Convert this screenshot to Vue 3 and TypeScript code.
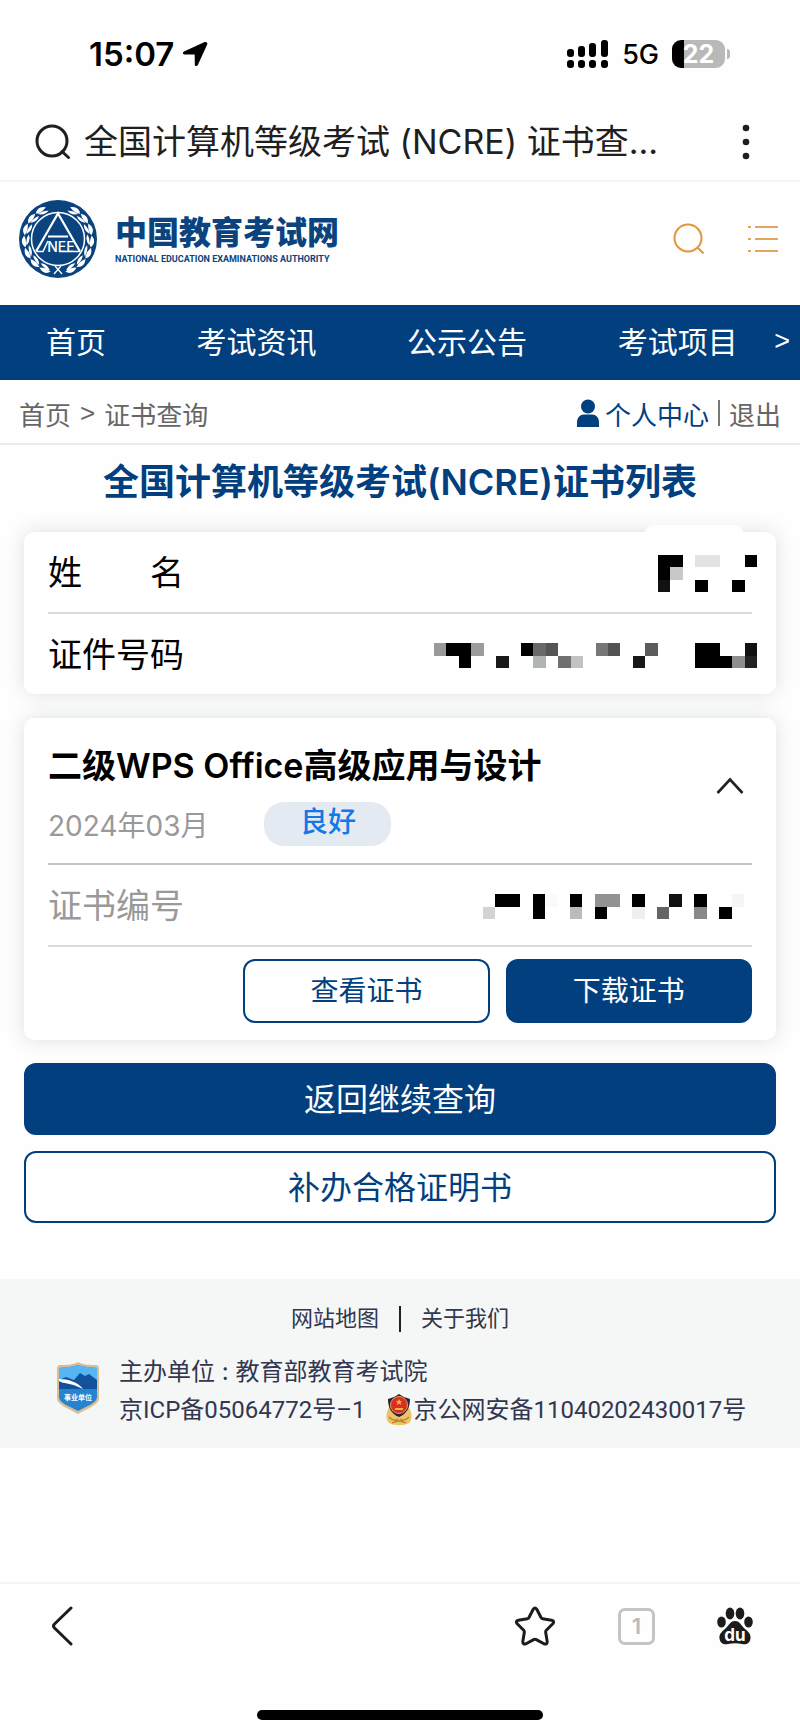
<script setup lang="ts">
import { ref } from 'vue'

type Cell = [col: number, row: number, fill: string]
interface Mask {
  cols: number
  rows: number
  cells: Cell[]
}

const navItems = ['首页', '考试资讯', '公示公告', '考试项目']
const expanded = ref(true)

const nameMask: Mask = {
  cols: 8,
  rows: 3,
  cells: [
    [0, 0, '#000'], [1, 0, '#000'], [0, 1, '#000'], [1, 1, '#c8c8c8'], [0, 2, '#111'],
    [3, 0, '#e2e4e4'], [4, 0, '#e2e4e4'], [7, 0, '#000'], [3, 2, '#000'], [6, 2, '#000'],
  ],
}
const idMask: Mask = {
  cols: 26,
  rows: 2,
  cells: [
    [0, 0, '#999'], [1, 0, '#000'], [2, 0, '#000'], [3, 0, '#9c9c9c'], [2, 1, '#000'], [5, 1, '#191919'],
    [7, 0, '#000'], [8, 0, '#696969'], [9, 0, '#555'], [8, 1, '#b0b4b2'], [10, 1, '#707070'], [11, 1, '#c2c2c2'],
    [13, 0, '#777'], [14, 0, '#535353'], [17, 0, '#5c5c5c'], [16, 1, '#181818'],
    [21, 0, '#000'], [22, 0, '#000'], [25, 0, '#111'], [21, 1, '#000'], [22, 1, '#000'], [23, 1, '#000'],
    [24, 1, '#8e8e8e'], [25, 1, '#222'],
  ],
}
const serialMask: Mask = {
  cols: 21,
  rows: 2,
  cells: [
    [0, 1, '#d3d3d3'], [1, 0, '#000'], [2, 0, '#000'], [4, 0, '#000'], [4, 1, '#000'], [5, 0, '#fafafa'],
    [7, 0, '#000'], [7, 1, '#bbb'], [9, 0, '#929292'], [10, 0, '#929292'], [9, 1, '#000'],
    [12, 0, '#000'], [12, 1, '#efefef'], [15, 0, '#111'], [14, 1, '#646464'], [17, 0, '#000'], [17, 1, '#888'],
    [19, 1, '#000'], [20, 0, '#f5f5f5'],
  ],
}

// Laurel leaves on both sides of the emblem, as angles from the bottom
const leaves = [16, 37, 58, 79, 100, 121, 142].flatMap((a) => [a, -a])
</script>

<template>
  <div class="page">
    <header class="status">
      <div class="clock">
        <span>15:07</span>
        <svg width="26" height="26" viewBox="0 0 26 26" aria-hidden="true">
          <path d="M24.600 1.400 C25.500 1.900 25.600 2.700 25.200 3.600 L15.800 24 C15 25.700 12.800 25.400 12.800 23.400 L12.700 13.600 L2.500 13.400 C.5 13.300 .3 11.200 2 10.400 L22.600 1.100 C23.400.8 24 .9 24.600 1.400Z" />
        </svg>
      </div>
      <div class="signals">
        <svg width="42" height="30" viewBox="0 0 42 30" aria-hidden="true">
          <rect x="0" y="10" width="7" height="8" rx="3" />
          <rect x="11" y="7" width="7" height="11" rx="3" />
          <rect x="22" y="4" width="7" height="14" rx="3" />
          <rect x="34" y="1" width="7" height="17" rx="3" />
          <rect x="0" y="21" width="7" height="8" rx="3" />
          <rect x="11" y="21" width="7" height="8" rx="3" />
          <rect x="22" y="21" width="7" height="8" rx="3" />
          <rect x="34" y="21" width="7" height="8" rx="3" />
        </svg>
        <span class="network">5G</span>
        <span class="battery"><span>22</span></span>
      </div>
    </header>

    <div class="address">
      <button class="query" type="button">
        <svg width="36" height="36" viewBox="0 0 36 36" fill="none" stroke="#1f1f1f" stroke-width="3" stroke-linecap="round" aria-hidden="true">
          <circle cx="17" cy="17" r="15" />
          <path d="M27 27.500 L33.500 33.500" />
        </svg>
        <span>全国计算机等级考试 (NCRE) 证书查...</span>
      </button>
      <button class="more" type="button" aria-label="更多">
        <svg width="8" height="36" viewBox="0 0 8 36" fill="#1f1f1f">
          <circle cx="4" cy="4" r="3.300" /><circle cx="4" cy="18" r="3.300" /><circle cx="4" cy="32" r="3.300" />
        </svg>
      </button>
    </div>

    <div class="brand">
      <a class="logo" href="#">
        <svg width="78" height="78" viewBox="0 0 78 78" aria-hidden="true">
          <circle cx="39" cy="39" r="39" fill="#0b437f" />
          <g fill="#fff">
            <g v-for="a in leaves" :key="a" :transform="`rotate(${a} 39 39)`">
              <path :transform="a > 0 ? '' : 'translate(78 0) scale(-1 1)'" d="M41 72.500 Q35 78 29 71.500 Q36 69.500 41 72.500Z M39.500 71 Q35 65.500 29 67 Q33 71 39.500 71Z" />
            </g>
          </g>
          <path d="M35 74 L42 66 M43 74 L36 66" stroke="#fff" stroke-width="1.300" />
          <circle cx="39" cy="39" r="26.500" fill="#0b437f" stroke="#fff" stroke-width="1.500" />
          <path d="M17 51.500 L39 13.500 L61 51.500 M29 36.500 H49" fill="none" stroke="#fff" stroke-width="2.200" />
          <path d="M18 51.500 H24 L29 41 M40 51.500 H61" fill="none" stroke="#fff" stroke-width="1.500" />
          <text x="42" y="52" text-anchor="middle" class="mono">NEE</text>
        </svg>
        <span class="wordmark">
          <strong>中国教育考试网</strong>
          <small>NATIONAL EDUCATION EXAMINATIONS AUTHORITY</small>
        </span>
      </a>
      <div class="tools">
        <button type="button" aria-label="搜索">
          <svg width="32" height="32" viewBox="0 0 32 32" fill="none" stroke="#e3943c" stroke-width="2">
            <circle cx="15" cy="15" r="13.500" /><path d="M24.500 24.500 L30.500 30.500" />
          </svg>
        </button>
        <button type="button" aria-label="菜单">
          <svg width="32" height="32" viewBox="0 0 32 32" stroke="#e3a45c" stroke-width="2">
            <path d="M1 4 H4 M8 4 H31 M1 16 H4 M8 16 H31 M1 28 H4 M8 28 H31" />
          </svg>
        </button>
      </div>
    </div>

    <nav class="nav">
      <a v-for="item in navItems" :key="item" href="#">{{ item }}</a>
      <button type="button" aria-label="更多栏目">&gt;</button>
    </nav>

    <div class="crumbs">
      <div class="trail">
        <a href="#">首页</a><span>&gt;</span><a href="#">证书查询</a>
      </div>
      <div class="account">
        <a class="me" href="#">
          <svg width="24" height="28" viewBox="0 0 24 28" fill="#023f7f" aria-hidden="true">
            <circle cx="12" cy="7.500" r="7" />
            <path d="M1 28 V23.500 C1 18.500 4 15.500 8 15.500 H16 C20 15.500 23 18.500 23 23.500 V28Z" />
          </svg>个人中心</a>
        <i></i>
        <a href="#">退出</a>
      </div>
    </div>

    <main class="main">
      <h1>全国计算机等级考试(NCRE)证书列表</h1>

      <section class="card person">
        <div class="row">
          <span class="spread"><span>姓</span><span>名</span></span>
          <svg class="mask" width="99" height="37" viewBox="0 0 8 3" preserveAspectRatio="none" shape-rendering="crispEdges" role="img" aria-label="姓名已隐藏">
            <rect v-for="[x, y, f] in nameMask.cells" :key="`${x}-${y}`" :x="x" :y="y" width="1" height="1" :fill="f" />
          </svg>
        </div>
        <div class="row">
          <span>证件号码</span>
          <svg class="mask" width="323" height="25" viewBox="0 0 26 2" preserveAspectRatio="none" shape-rendering="crispEdges" role="img" aria-label="证件号码已隐藏">
            <rect v-for="[x, y, f] in idMask.cells" :key="`${x}-${y}`" :x="x" :y="y" width="1" height="1" :fill="f" />
          </svg>
        </div>
      </section>

      <section class="card cert">
        <div class="summary">
          <div>
            <h2>二级WPS Office高级应用与设计</h2>
            <p><time datetime="2024-03">2024年03月</time><span class="badge">良好</span></p>
          </div>
          <button type="button" aria-label="展开或收起" :aria-expanded="expanded" @click="expanded = !expanded">
            <svg width="28" height="18" viewBox="0 0 28 18" fill="none" stroke="#222" stroke-width="2.600">
              <path d="M1.500 16 L14 2.500 L26.500 16" />
            </svg>
          </button>
        </div>
        <div class="row serial">
          <span>证书编号</span>
          <svg class="mask" width="261" height="25" viewBox="0 0 21 2" preserveAspectRatio="none" shape-rendering="crispEdges" role="img" aria-label="证书编号已隐藏">
            <rect v-for="[x, y, f] in serialMask.cells" :key="`${x}-${y}`" :x="x" :y="y" width="1" height="1" :fill="f" />
          </svg>
        </div>
        <div class="actions">
          <button class="btn line" type="button">查看证书</button>
          <button class="btn solid" type="button">下载证书</button>
        </div>
      </section>

      <button class="btn wide solid" type="button">返回继续查询</button>
      <button class="btn wide line" type="button">补办合格证明书</button>
    </main>

    <footer class="footer">
      <div class="links"><a href="#">网站地图</a><i></i><a href="#">关于我们</a></div>
      <div class="legal">
        <svg width="44" height="52" viewBox="0 0 44 52" aria-hidden="true">
          <path d="M22 0 C27 3 35 3 40 3 Q43 3 43 7 V36 C43 43 32 46 22 52 C12 46 1 43 1 36 V7 Q1 3 4 3 C9 3 17 3 22 0Z" fill="#d9bd93" />
          <path d="M22 3 C28 5 34 5 41 6 V35 C41 41 31 44 22 49 C13 44 3 41 3 35 V6 C10 5 16 5 22 3Z" fill="#2583cf" />
          <path d="M22 3 C28 5 34 5 41 6 V20 H3 V6 C10 5 16 5 22 3Z" fill="#56b5f3" />
          <path d="M3 18 L10 15 L18 18 L24 11 L29 14 L33 12 L41 18 V27 H3Z" fill="#12529d" />
          <path d="M3 17 C12 17 22 20 27 27 L20 24 C14 21 8 22 3 19Z" fill="#fff" />
          <text x="22" y="38" text-anchor="middle" class="seal">事业单位</text>
        </svg>
        <div class="lines">
          <p class="host">主办单位 : 教育部教育考试院</p>
          <p>
            <a href="#">京ICP备05064772号–1</a>
            <a class="police" href="#">
              <svg width="28" height="32" viewBox="0 0 28 32" aria-hidden="true">
                <path d="M5 12 C1 18 0 25 4 29 C9 32 19 32 24 29 C28 25 27 18 23 12Z" fill="#ecc367" />
                <path d="M14 0 L19 3 L25 5 C25 13 22 20 14 23 C6 20 3 13 3 5 L9 3Z" fill="#27233e" />
                <circle cx="14" cy="11" r="8.500" fill="#d92e23" stroke="#e5a44a" />
                <path d="M14 5 L15 7 L17 7 L15.500 8.500 L16 11 L14 9.500 L12 11 L12.500 8.500 L11 7 L13 7Z M10 14 H18 V16 H10Z" fill="#f5b63f" />
                <path d="M4 23 Q9 28 13 25 M24 23 Q19 28 15 25 M7 29 Q14 25 21 29" fill="none" stroke="#bc812f" stroke-width="1.300" />
              </svg>京公网安备11040202430017号</a>
          </p>
        </div>
      </div>
    </footer>

    <div class="toolbar">
      <button type="button" aria-label="返回">
        <svg width="24" height="40" viewBox="0 0 24 40" fill="none" stroke="#1c1c1c" stroke-width="3" stroke-linecap="round" stroke-linejoin="round">
          <path d="M21 2 L4.500 18 Q2.500 20 4.500 22 L21 38" />
        </svg>
      </button>
      <div class="right">
        <button type="button" aria-label="收藏">
          <svg width="42" height="40" viewBox="0 0 42 40" fill="none" stroke="#1c1c1c" stroke-width="3" stroke-linejoin="round">
            <path d="M19.200 3.300 Q21 .8 22.800 3.300 L27 11.500 Q27.500 12.600 28.700 12.800 L37.500 14.200 Q41 15 38.800 17.800 L32.300 24.300 Q31.500 25.200 31.700 26.400 L33.200 35.500 Q33.300 38.900 30 37.800 L22.300 33.600 Q21 32.900 19.700 33.600 L12 37.800 Q8.700 38.900 8.800 35.500 L10.300 26.400 Q10.500 25.200 9.700 24.300 L3.200 17.800 Q1 15 4.500 14.200 L13.300 12.800 Q14.500 12.600 15 11.500Z" />
          </svg>
        </button>
        <button class="tabs" type="button" aria-label="标签页 1">1</button>
        <button type="button" aria-label="百度">
          <svg width="36" height="38" viewBox="0 0 36 38" fill="#1c1c1c">
            <ellipse cx="13" cy="6.500" rx="4.300" ry="6" /><ellipse cx="23" cy="6.500" rx="4.300" ry="6" />
            <ellipse cx="4.500" cy="15" rx="4.300" ry="5.500" /><ellipse cx="31.500" cy="15" rx="4.300" ry="5.500" />
            <path d="M18 14 C23 14 24.500 19 28 22 C31.500 25 34 27 33.500 31.500 C33 36 29.500 38 25 37 C20 36 16 36 11 37 C6.500 38 3 36 2.500 31.500 C2 27 4.500 25 8 22 C11.500 19 13 14 18 14Z" />
            <text x="18" y="34" text-anchor="middle" class="du">du</text>
          </svg>
        </button>
      </div>
    </div>
    <div class="home"></div>
  </div>
</template>

<style>
body {
  margin: 0;
  background: #fdfefe;
}
</style>

<style scoped>
.page {
  --blue: #023f7f;
  display: flex;
  flex-direction: column;
  min-height: 100vh;
  background: #fefefe;
  color: #000;
  font-family: Inter, "Noto Sans CJK SC", sans-serif;
}
.page *,
.page {
  box-sizing: border-box;
}
a {
  color: inherit;
  text-decoration: none;
}
button {
  margin: 0;
  padding: 0;
  border: 0;
  background: none;
  color: inherit;
  font: inherit;
  cursor: pointer;
}
svg {
  display: block;
  flex: none;
}
h1,
h2,
p {
  margin: 0;
}

.status {
  display: flex;
  justify-content: space-between;
  align-items: center;
  height: 108px;
  padding: 0 75px 0 89px;
}
.clock {
  display: flex;
  align-items: center;
  gap: 8px;
  font-size: 33px;
  font-weight: 600;
}
.signals {
  display: flex;
  align-items: center;
  gap: 13px;
}
.network {
  font-size: 27px;
  font-weight: 500;
}
.battery {
  position: relative;
  width: 53px;
  height: 28px;
  border-radius: 9px;
  background: linear-gradient(90deg, #000 12px, #b9b9b9 12px);
  color: #fff;
  font-size: 25px;
  font-weight: 700;
  line-height: 28px;
  text-align: center;
}
.battery::after {
  content: "";
  position: absolute;
  left: 55px;
  top: 9px;
  width: 3px;
  height: 10px;
  border-radius: 0 3px 3px 0;
  background: #b9b9b9;
}

.address {
  display: flex;
  justify-content: space-between;
  align-items: center;
  height: 74px;
  padding: 0 50px 5px 35px;
  border-bottom: 2px solid #f6f6f6;
}
.query {
  display: flex;
  align-items: center;
  gap: 13px;
  color: #1f1f1f;
  font-size: 34px;
  line-height: 48px;
  white-space: nowrap;
}

.brand {
  display: flex;
  justify-content: space-between;
  align-items: center;
  height: 123px;
  padding: 0 21px 10px 19px;
}
.logo {
  display: flex;
  align-items: center;
  gap: 18px;
}
.mono {
  fill: #fff;
  font: 500 14px Inter, sans-serif;
}
.wordmark {
  display: flex;
  flex-direction: column;
  color: #0b437f;
}
.wordmark strong {
  font-size: 32px;
  font-weight: 900;
  line-height: 40px;
}
.wordmark small {
  font-family: Roboto, sans-serif;
  font-size: 9px;
  font-weight: 700;
  line-height: 12px;
}
.tools {
  display: flex;
  gap: 42px;
}

.nav {
  display: flex;
  align-items: center;
  justify-content: space-between;
  height: 75px;
  padding: 0 10px 6px 46px;
  background: var(--blue);
  color: #fff;
  font-size: 30px;
}
.nav button {
  margin: 4px 0 0 -54px;
  font-family: "Liberation Sans", sans-serif;
  font-size: 27px;
}

.crumbs {
  display: flex;
  justify-content: space-between;
  align-items: center;
  height: 65px;
  padding: 3px 19px 0;
  border-bottom: 2px solid #e9ebeb;
  color: #666;
  font-size: 26px;
}
.trail,
.account,
.me {
  display: flex;
  align-items: center;
}
.trail {
  gap: 9px;
}
.trail span {
  font-family: "Liberation Sans", sans-serif;
}
.account {
  gap: 9px;
}
.account i {
  width: 2px;
  height: 26px;
  background: #777;
}
.me {
  gap: 5px;
  color: var(--blue);
}

.main {
  display: flex;
  flex-direction: column;
  padding: 12px 24px 0;
}
h1 {
  color: var(--blue);
  font-size: 36px;
  font-weight: 600;
  line-height: 50px;
  text-align: center;
}
.card {
  border-radius: 10px;
  background: #fff;
  box-shadow: 0 0 20px rgba(30, 50, 50, 0.15);
}
.person {
  position: relative;
  margin-top: 25px;
  padding: 0 24px;
}
.person::before {
  content: "";
  position: absolute;
  top: -7px;
  right: 33px;
  width: 98px;
  height: 8px;
  border-radius: 12px 12px 0 0;
  background: #fefefe;
}
.row {
  display: flex;
  justify-content: space-between;
  align-items: center;
  height: 80px;
  padding-bottom: 3px;
  font-size: 34px;
}
.row + .row {
  height: 82px;
  border-top: 2px solid #d9dada;
}
.spread {
  display: flex;
  justify-content: space-between;
  width: 136px;
}
.mask {
  margin: 6px -5px 0 0;
}
.cert {
  margin-top: 24px;
  padding: 0 24px 17px;
}
.summary {
  display: flex;
  justify-content: space-between;
  align-items: center;
  height: 147px;
  border-bottom: 2px solid #c3c5c5;
}
.summary > div {
  padding-top: 18px;
}
.summary button {
  margin: 0 8px 10px 0;
}
h2 {
  font-size: 34px;
  font-weight: 600;
  line-height: 48px;
}
.summary p {
  display: flex;
  align-items: center;
  gap: 56px;
  height: 68px;
  color: #999;
  font-size: 28px;
}
.badge {
  width: 127px;
  height: 44px;
  border-radius: 20px;
  background: #e4eaf1;
  color: #1478e6;
  font-weight: 500;
  line-height: 40px;
  text-align: center;
}
.serial {
  height: 82px;
  border-bottom: 2px solid #d9dcdc;
  color: #999;
}
.serial .mask {
  margin-right: 8px;
}
.actions {
  display: flex;
  justify-content: flex-end;
  gap: 16px;
  margin-top: 12px;
}
.btn {
  padding-bottom: 5px;
  border: 2px solid var(--blue);
  border-radius: 12px;
}
.solid {
  background: var(--blue);
  color: #fff;
}
.line {
  background: #fff;
  color: var(--blue);
}
.actions .btn {
  width: 35%;
  height: 64px;
  font-size: 28px;
}
.wide {
  height: 72px;
  margin-top: 16px;
  font-size: 32px;
}
.cert + .wide {
  margin-top: 23px;
}

.footer {
  margin-top: 56px;
  padding: 24px 50px 19px;
  background: #f5f7f7;
  color: #32364e;
  font-family: Roboto, "Noto Sans CJK SC", sans-serif;
}
.links {
  display: flex;
  justify-content: center;
  align-items: center;
  gap: 20px;
  font-size: 22px;
  line-height: 32px;
}
.links i {
  width: 2px;
  height: 26px;
  background: #222;
}
.legal {
  display: flex;
  align-items: flex-start;
  gap: 19px;
  margin-top: 18px;
  padding-left: 6px;
}
.legal > svg {
  margin-top: 9px;
}
.seal {
  fill: #fff;
  font: 700 7px "Noto Sans CJK SC", sans-serif;
}
.lines {
  font-size: 24px;
  line-height: 38px;
  white-space: nowrap;
}
.lines p {
  display: flex;
  gap: 20px;
}
.lines .host {
  font-family: Inter, "Noto Sans CJK SC", sans-serif;
}
.police {
  display: flex;
  align-items: center;
}

.toolbar {
  display: flex;
  justify-content: space-between;
  align-items: center;
  height: 91px;
  margin-top: auto;
  padding: 0 47px 5px 50px;
  border-top: 2px solid #f5f5f5;
}
.right {
  display: flex;
  align-items: center;
  gap: 62px;
}
.tabs {
  width: 37px;
  height: 37px;
  border: 3px solid #c4c4c4;
  border-radius: 7px;
  color: #b9b9b9;
  font-size: 22px;
  font-weight: 600;
  line-height: 30px;
}
.du {
  fill: #fff;
  font: 700 17px Inter, sans-serif;
}
.home {
  width: 286px;
  height: 10px;
  margin: 37px auto 14px;
  border-radius: 5px;
  background: #000;
}
</style>
